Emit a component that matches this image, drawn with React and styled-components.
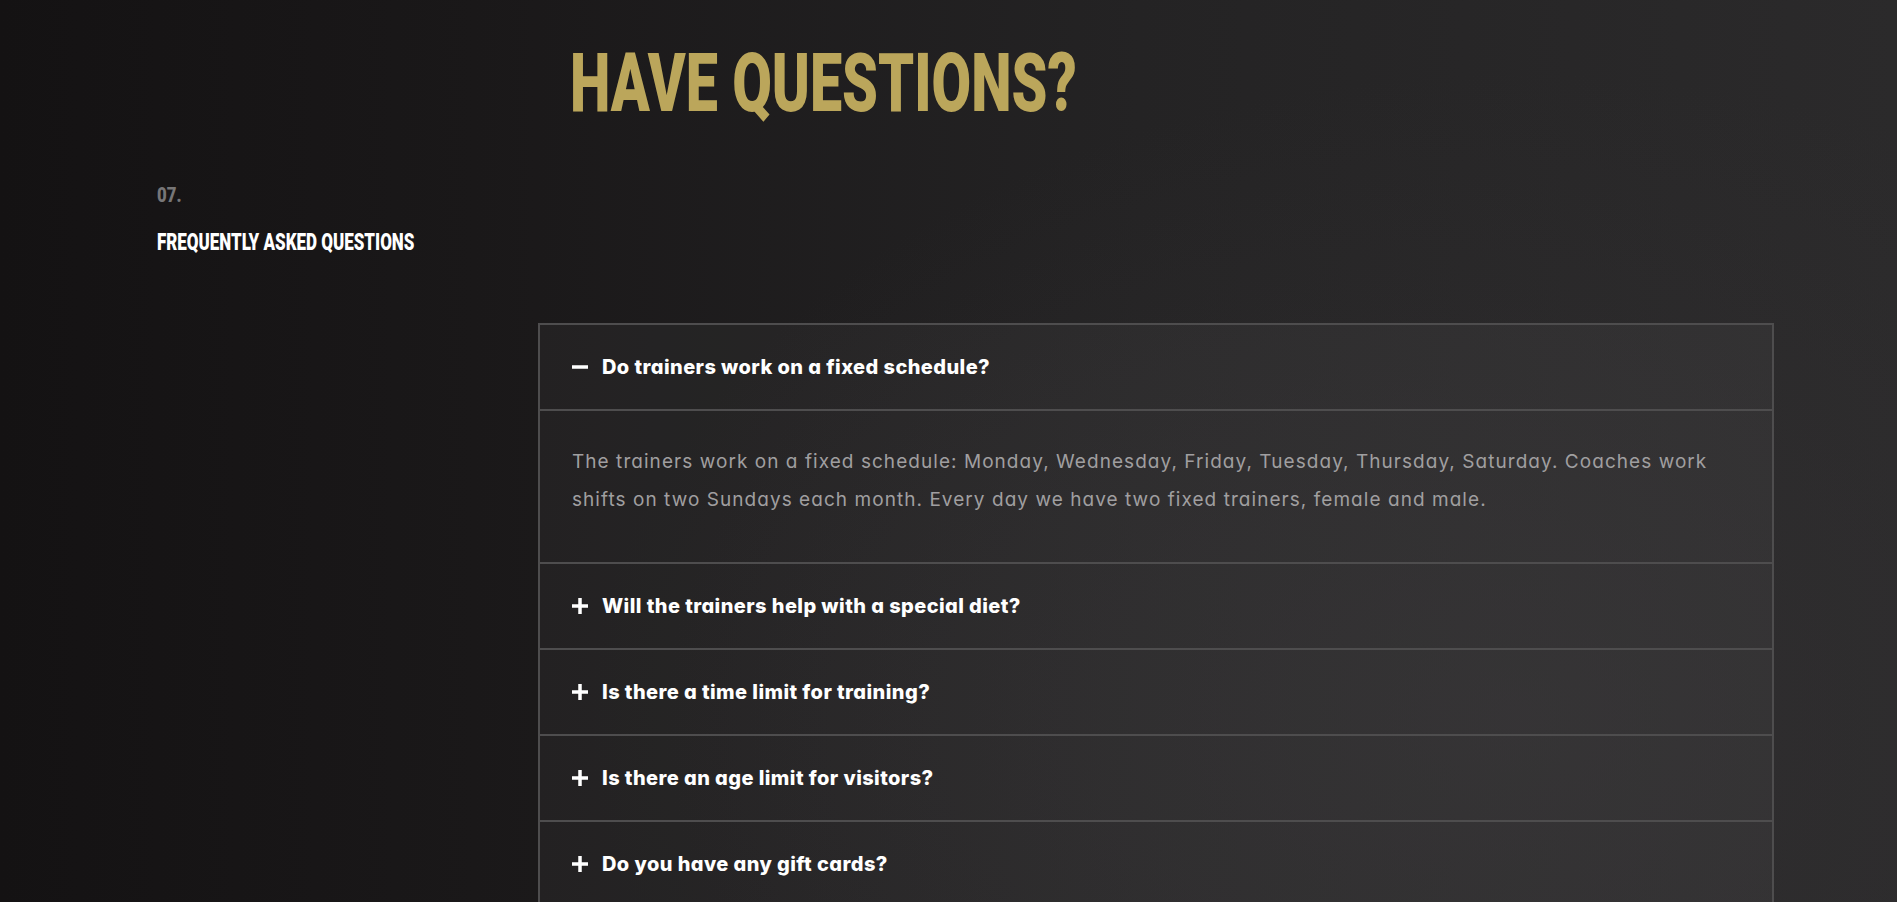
import React, { useState } from 'react';
import styled, { createGlobalStyle } from 'styled-components';

const GlobalStyle = createGlobalStyle`
  html, body {
    margin: 0;
    padding: 0;
    background: #181617;
  }
  body {
    font-family: 'Inter', 'Noto Sans', sans-serif;
    -webkit-font-smoothing: antialiased;
  }
`;

const faqs = [
  {
    q: 'Do trainers work on a fixed schedule?',
    a: 'The trainers work on a fixed schedule: Monday, Wednesday, Friday, Tuesday, Thursday, Saturday. Coaches work shifts on two Sundays each month. Every day we have two fixed trainers, female and male.',
  },
  {
    q: 'Will the trainers help with a special diet?',
    a: 'Yes, our trainers can put together a nutrition plan that fits your goals and your training program.',
  },
  {
    q: 'Is there a time limit for training?',
    a: 'No, you can train as long as you like during the opening hours of the gym.',
  },
  {
    q: 'Is there an age limit for visitors?',
    a: 'Visitors under 16 can train only with the written consent of their parents.',
  },
  {
    q: 'Do you have any gift cards?',
    a: 'Yes, gift cards are available at the reception for any membership.',
  },
];

const App = () => {
  const [open, setOpen] = useState(0);

  const toggle = (i) => setOpen(prev => (prev === i ? -1 : i));

  return (
    <>
      <GlobalStyle />
      <Page>
        <Title>HAVE QUESTIONS?</Title>

        <Labels>
          <Number>07.</Number>
          <Caption>FREQUENTLY ASKED QUESTIONS</Caption>
        </Labels>

        <Accordion>
          {faqs.map((item, i) => (
            <Item key={item.q}>
              <Header onClick={() => toggle(i)}>
                <ToggleIcon open={open === i} />
                <Question>{item.q}</Question>
              </Header>
              {open === i && (
                <Answer>
                  <p>{item.a}</p>
                </Answer>
              )}
            </Item>
          ))}
        </Accordion>
      </Page>
    </>
  );
};

const ToggleIcon = ({ open }) => (
  <IconBox viewBox="0 0 16 16" aria-hidden="true">
    <rect x="0" y="6.25" width="16" height="3.5" fill="currentColor" />
    {!open && <rect x="6.25" y="0" width="3.5" height="16" fill="currentColor" />}
  </IconBox>
);

export default App;

/* ---------- Styled Components ---------- */
const Page = styled.main`
  min-height: 100vh;
  box-sizing: border-box;
  padding: 42px 0 120px 157px;
  background:
    radial-gradient(ellipse 70% 90% at 80% 70%, rgba(52, 50, 52, 0.55), rgba(52, 50, 52, 0) 70%),
    linear-gradient(90deg, #141213 0%, #1a1819 25%, #242324 60%, #2b2a2b 100%);
  overflow: hidden;
`;

const Title = styled.h2`
  margin: 0 0 0 413px;
  font-family: 'Roboto', 'Liberation Sans', sans-serif;
  font-weight: 900;
  font-size: 82px;
  line-height: 82px;
  color: #bba65b;
  white-space: nowrap;
  transform: scaleX(0.70);
  transform-origin: left center;
`;

const Labels = styled.div`
  margin-top: 61px;
  display: flex;
  flex-direction: column;
  gap: 24px;
  font-family: 'Roboto', 'Liberation Sans', sans-serif;
  font-weight: 900;
`;

const Number = styled.span`
  display: block;
  font-size: 21px;
  line-height: 21px;
  color: #777677;
  transform: scaleX(0.8);
  transform-origin: left center;
`;

const Caption = styled.span`
  display: block;
  font-size: 24px;
  line-height: 24px;
  color: #ffffff;
  white-space: nowrap;
  transform: scaleX(0.707);
  transform-origin: left center;
`;

const Accordion = styled.section`
  margin: 69px 0 0 381px;
  width: 1236px;
  box-sizing: border-box;
  border: 2px solid #4e4d4e;
  border-bottom: none;
  background: rgba(255, 255, 255, 0.035);
`;

const Item = styled.div`
  border-bottom: 2px solid #4e4d4e;
`;

const Header = styled.button`
  display: flex;
  align-items: center;
  gap: 14px;
  width: 100%;
  height: 84px;
  padding: 0 32px;
  border: none;
  background: transparent;
  color: #ffffff;
  cursor: pointer;
  text-align: left;
`;

const IconBox = styled.svg`
  width: 16px;
  height: 16px;
  flex-shrink: 0;
  color: #ffffff;
`;

const Question = styled.span`
  font-family: 'Inter', 'Noto Sans', sans-serif;
  font-feature-settings: 'cv11' 1;
  font-weight: 800;
  font-size: 20px;
  letter-spacing: 0.42px;
`;

const Answer = styled.div`
  border-top: 2px solid #4e4d4e;
  padding: 32px 32px 43px;

  p {
    margin: 0;
    font-family: 'Inter', 'Noto Sans', sans-serif;
    font-feature-settings: 'cv11' 1;
    font-weight: 400;
    font-size: 19px;
    line-height: 38px;
    letter-spacing: 1.05px;
    color: #a09fa0;
  }
`;
